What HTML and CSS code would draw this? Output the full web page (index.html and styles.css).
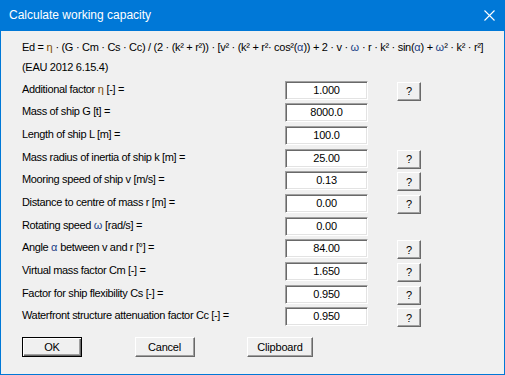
FILE: index.html
```html
<!DOCTYPE html>
<html lang="en">
<head>
    <meta charset="UTF-8">
    <meta name="viewport" content="width=device-width, initial-scale=1.0">
    <title>Calculate working capacity</title>
    <link rel="stylesheet" href="styles.css">
</head>
<body>
    <div class="dialog">
        <div class="titlebar">
            <span class="title">Calculate working capacity</span>
            <svg class="close" width="11" height="11" viewBox="0 0 11 11">
                <path d="M0.5 0.5 L10.5 10.5 M10.5 0.5 L0.5 10.5" stroke="#fff" stroke-width="1.1" fill="none"/>
            </svg>
        </div>
        <div class="content">
            <div class="formula">
                <div>Ed = <span class="sym eta">η</span> · (G · Cm · Cs · Cc) / (2 · (k² + r²)) · [v² · (k² + r²· cos²(<span class="sym">α</span>)) + 2 · v · <span class="sym">ω</span> · r · k² · sin(<span class="sym">α</span>) + <span class="sym">ω</span>² · k² · r²]</div>
                <div>(EAU 2012 6.15.4)</div>
            </div>

            <div class="rows">
                <div class="row">
                    <label>Additional factor <span class="sym eta">η</span> [-] =</label>
                    <div class="field">1.000</div>
                    <button class="help">?</button>
                </div>
                <div class="row">
                    <label>Mass of ship G [t] =</label>
                    <div class="field">8000.0</div>
                </div>
                <div class="row">
                    <label>Length of ship L [m] =</label>
                    <div class="field">100.0</div>
                </div>
                <div class="row">
                    <label>Mass radius of inertia of ship k [m] =</label>
                    <div class="field">25.00</div>
                    <button class="help">?</button>
                </div>
                <div class="row">
                    <label>Mooring speed of ship v [m/s] =</label>
                    <div class="field">0.13</div>
                    <button class="help">?</button>
                </div>
                <div class="row">
                    <label>Distance to centre of mass r [m] =</label>
                    <div class="field">0.00</div>
                    <button class="help">?</button>
                </div>
                <div class="row">
                    <label>Rotating speed <span class="sym">ω</span> [rad/s] =</label>
                    <div class="field">0.00</div>
                </div>
                <div class="row">
                    <label>Angle <span class="sym">α</span> between v and r [°] =</label>
                    <div class="field">84.00</div>
                    <button class="help">?</button>
                </div>
                <div class="row">
                    <label>Virtual mass factor Cm [-] =</label>
                    <div class="field">1.650</div>
                    <button class="help">?</button>
                </div>
                <div class="row">
                    <label>Factor for ship flexibility Cs [-] =</label>
                    <div class="field">0.950</div>
                    <button class="help">?</button>
                </div>
                <div class="row">
                    <label>Waterfront structure attenuation factor Cc [-] =</label>
                    <div class="field">0.950</div>
                    <button class="help">?</button>
                </div>
            </div>

            <div class="actions">
                <button class="btn default">OK</button>
                <button class="btn">Cancel</button>
                <button class="btn wide">Clipboard</button>
            </div>
        </div>
    </div>
</body>
</html>
```

FILE: styles.css
```css
body {
    margin: 0;
    background: #f0f0f0;
    font-family: "Liberation Sans", Arial, sans-serif;
    font-size: 11px;
    color: #000;
}
.dialog {
    width: 505px;
    height: 375px;
    box-sizing: border-box;
    border: 1px solid #0078d7;
    border-top: none;
    background: #f0f0f0;
}
.titlebar {
    height: 31px;
    background: #0078d7;
    display: flex;
    align-items: center;
    justify-content: space-between;
    padding: 0 10px 0 9px;
    margin: 0 -1px;
}
.title {
    color: #fff;
    font-size: 12px;
    line-height: 31px;
}
.close {
    display: block;
}
.content {
    padding: 6px 0 0 21px;
    letter-spacing: -0.35px;
}
.formula {
    line-height: 20px;
    white-space: nowrap;
    letter-spacing: -0.3px;
}
.sym {
    color: #1b3f86;
    letter-spacing: 0;
}
.sym.eta {
    color: #7a4a00;
}
.rows {
    margin-top: 3.667px;
}
.row {
    display: flex;
    height: 22.667px;
    align-items: flex-start;
}
.row label {
    width: 263px;
    padding-top: 2px;
    line-height: 13px;
    white-space: nowrap;
}
.field {
    width: 83px;
    height: 19px;
    box-sizing: border-box;
    background: #fff;
    border: 1px solid;
    border-color: #a0a0a0 #fff #fff #a0a0a0;
    box-shadow: inset 1px 1px #696969, inset -1px -1px #e3e3e3;
    text-align: center;
    line-height: 17px;
    letter-spacing: -0.2px;
}
button {
    font-family: inherit;
    font-size: 11px;
    letter-spacing: -0.2px;
    color: #000;
    background: #f0f0f0;
    border: 1px solid;
    border-color: #fff #696969 #696969 #fff;
    box-shadow: inset -1px -1px #a0a0a0;
    padding: 0;
    margin: 0;
    border-radius: 0;
}
.help {
    width: 24px;
    height: 19px;
    margin: 1px 0 0 29px;
    line-height: 16px;
}
.actions {
    display: flex;
    gap: 52.5px;
    margin-top: 7px;
}
.btn {
    width: 60px;
    height: 20px;
}
.btn.wide {
    width: 66px;
}
.btn.default {
    border: 1px solid #000;
    box-shadow: inset 1px 1px #fff, inset -1px -1px #696969, inset -2px -2px #a0a0a0;
}
```
